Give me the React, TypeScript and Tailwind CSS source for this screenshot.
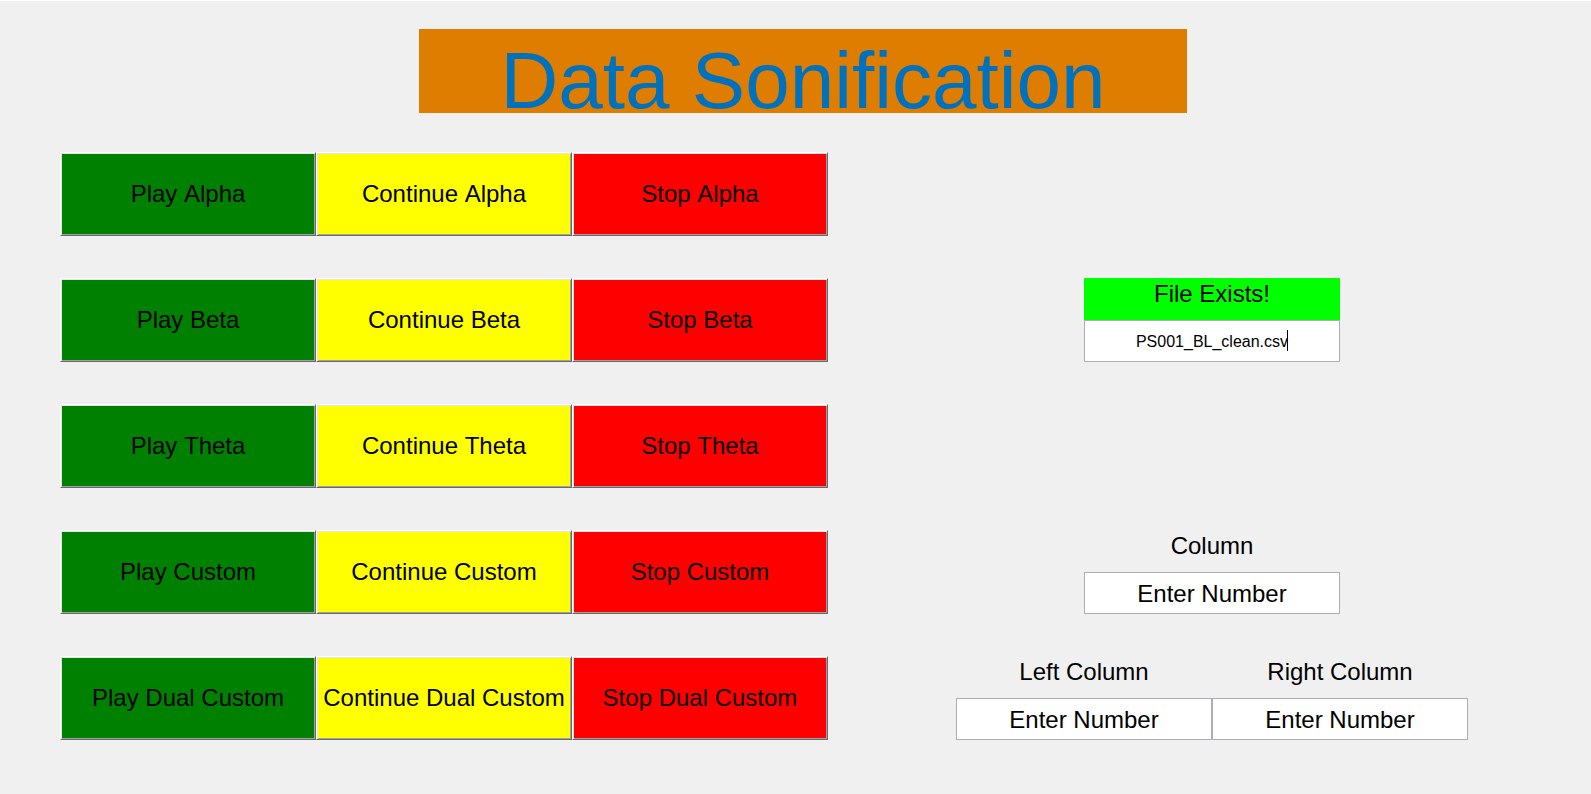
import { useState } from "react";

const bands = ["Alpha", "Beta", "Theta", "Custom", "Dual Custom"];

const actions = [
  { verb: "Play", color: "bg-[#008000]" },
  { verb: "Continue", color: "bg-[#ffff00]" },
  { verb: "Stop", color: "bg-[#ff0000]" },
];

function ActionButton({ label, color }: { label: string; color: string }) {
  return (
    <button
      type="button"
      className={`min-w-0 whitespace-nowrap border border-t-white border-r-[#696969] border-b-[#696969] border-l-white text-2xl shadow-[inset_1px_1px_0_#e3e3e3,inset_-1px_-1px_0_#a0a0a0] ${color}`}
    >
      {label}
    </button>
  );
}

function NumberField({ id, label }: { id: string; label: string }) {
  const [value, setValue] = useState("Enter Number");
  return (
    <div className="grid min-w-0 grid-rows-2">
      <label htmlFor={id} className="pt-0.5 text-center text-2xl leading-7">
        {label}
      </label>
      <input
        id={id}
        type="text"
        value={value}
        onChange={(e) => setValue(e.target.value)}
        className="w-full min-w-0 border border-[#abadb3] bg-white pt-0.5 text-center text-2xl outline-none"
      />
    </div>
  );
}

function FileField() {
  const [value, setValue] = useState("PS001_BL_clean.csv");
  return (
    <div className="grid min-w-0 grid-rows-2">
      <label htmlFor="file-name" className="bg-[#00ff00] pt-0.5 text-center text-2xl leading-7">
        File Exists!
      </label>
      <div className="relative grid">
        <input
          id="file-name"
          type="text"
          value={value}
          onChange={(e) => setValue(e.target.value)}
          className="w-full min-w-0 border border-[#abadb3] bg-white pt-0.5 text-center text-base outline-none"
        />
        <span className="pointer-events-none absolute top-2.5 left-1/2 ml-[75px] h-[21px] w-px bg-black" />
      </div>
    </div>
  );
}

function SidePanel({ band }: { band: string }) {
  if (band === "Beta") {
    return (
      <div className="col-start-2 col-span-2 grid">
        <FileField />
      </div>
    );
  }
  if (band === "Custom") {
    return (
      <div className="col-start-2 col-span-2 grid">
        <NumberField id="column" label="Column" />
      </div>
    );
  }
  if (band === "Dual Custom") {
    return (
      <div className="col-span-4 grid grid-cols-2">
        <NumberField id="left-column" label="Left Column" />
        <NumberField id="right-column" label="Right Column" />
      </div>
    );
  }
  return null;
}

export default function App() {
  return (
    <main className="min-h-screen border-t border-white bg-[#f0f0f0] pt-7 pb-13 font-['Liberation_Sans',Arial,sans-serif] text-black [font-kerning:none]">
      <header className="grid grid-cols-[419fr_768fr_404fr]">
        <h1 className="col-start-2 h-21 whitespace-nowrap bg-[#de7d00] pt-5 text-center text-[80px] leading-16 text-[#0072bd] [font-variant-ligatures:none]">
          Data Sonification
        </h1>
      </header>
      <div className="mt-[39px] flex flex-col gap-[42px]">
        {bands.map((band) => (
          <section
            key={band}
            aria-label={band}
            className="grid h-21 grid-cols-[60fr_768fr_128fr_512fr_123fr]"
          >
            <div className="col-start-2 grid grid-cols-3">
              {actions.map((a) => (
                <ActionButton key={a.verb} label={`${a.verb} ${band}`} color={a.color} />
              ))}
            </div>
            <div className="col-start-4 grid grid-cols-4">
              <SidePanel band={band} />
            </div>
          </section>
        ))}
      </div>
    </main>
  );
}
